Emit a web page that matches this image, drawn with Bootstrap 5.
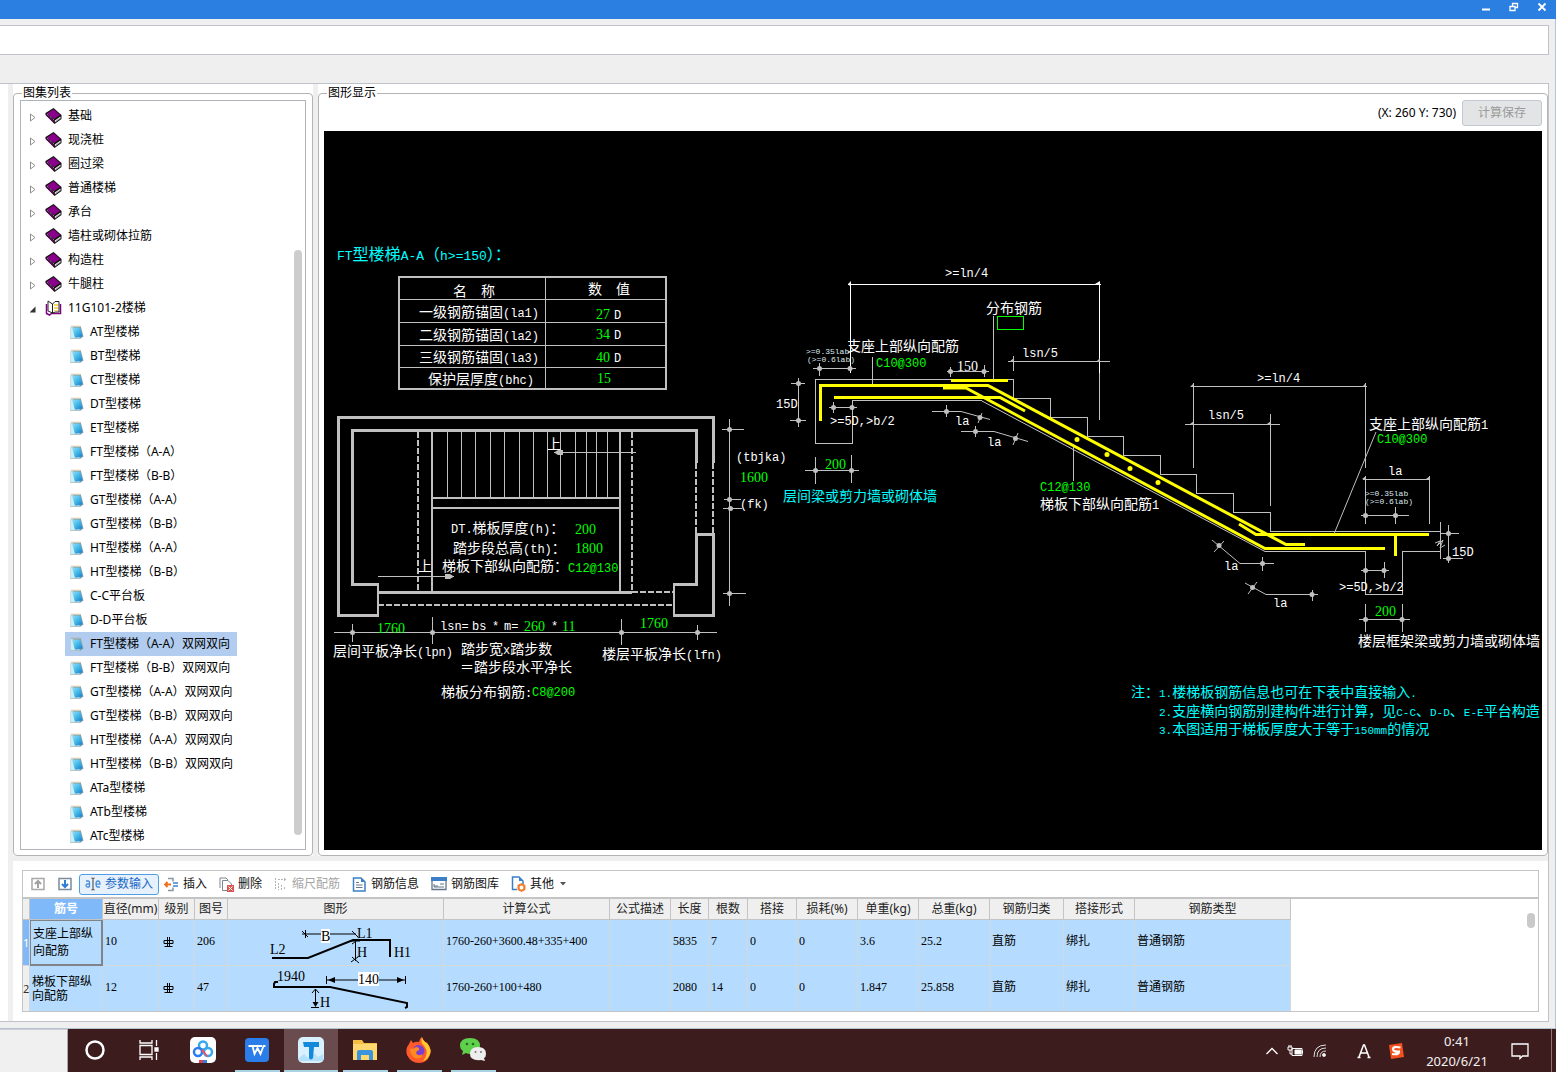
<!DOCTYPE html>
<html lang="zh-CN">
<head>
<meta charset="utf-8">
<meta name="viewport" content="width=device-width, initial-scale=1">
<title>钢筋计算</title>
<link href="https://cdn.jsdelivr.net/npm/bootstrap@5.3.0/dist/css/bootstrap.min.css" rel="stylesheet">
<style>
:root { --line:#bfc3c9; --face:#efefef; }
body { font-family:"Noto Sans","Noto Sans CJK SC",sans-serif; font-size:12px; line-height:16px; color:#000; background:var(--face); }
.titlebar { background:#2b7fe1; height:19px; }
.titlebar button { width:28px; height:13px; line-height:0; }
.plain { border:0; background:none; padding:0; color:inherit; }
.app-body { padding:6px 6px 6px 0; border-right:1px solid #b4c3d4; border-bottom:1px solid #b4c3d4; }
.strip { height:30px; background:#fff; border:1px solid var(--line); border-left:0; margin-bottom:28px; }
.workspace { border:1px solid var(--line); border-left:0; background:var(--face); }
.gutter { width:8px; background:#fff; margin-right:5px; flex:none; }
.panes { min-width:0; }
.groups { gap:5px; }
.side, .view { background:#fff; padding-top:2px; }
.side { width:300px; flex:none; }
.groupbox { border:1px solid #b4b4b4; border-radius:4px; padding:0 5px; padding-bottom:5px; margin:0; height:100%; }
.groupbox legend { float:none; width:auto; font-size:12px; line-height:14px; margin:0 0 0 3px; padding:0 1px; }
.side .groupbox { padding-left:6px; padding-right:6px; }
.side legend { margin-left:2px; }
.tree-box { border:1px solid #b0b4b8; padding:3px 0 1px; position:relative; }
.tree-box ul { margin:0; padding:0; list-style:none; }
.tree-row { height:24px; padding-left:9px; }
.tree-row a, .leaf { color:#000; text-decoration:none; white-space:nowrap; }
.tree-row .plain { width:15px; height:16px; line-height:0; text-align:left; }
.tree-row .plain svg { margin-top:3px; }
.tree-row a { gap:6px; }
.leaf { height:24px; margin-left:44px; padding:0 7px 0 5px; gap:6px; width:max-content; }
.leaf.active { background:#b1ccee; }
.thumb { position:absolute; right:3px; top:149px; bottom:14px; width:8px; border-radius:4px; background:#cdcdcd; }
.coordbar { height:31px; gap:6px; padding-bottom:6px; }
.btn-save { font-size:12px; line-height:16px; width:80px; height:26px; padding:0; border-radius:3px; }
.btn-save:disabled { background:#e3e4e5; color:#9a9a9a; border-color:#c1c8d2; opacity:1; }
.cad { background:#000; }
.cad svg { display:block; width:100%; height:auto; }
.lower { background:#fff; margin:5px 0 0; padding:9px; }
.grid-box { border:1px solid #c4c4c4; position:relative; }
.toolbar { height:28px; border-bottom:2px solid #c4c4c4; padding:0 2px; gap:2px; }
.tool { font-size:12px; line-height:16px; height:21px; padding:0 4px; gap:4px; border-radius:3px; border:1px solid transparent; color:#111; display:inline-flex; align-items:center; background:none; white-space:nowrap; }
.tool:disabled { color:#a5a5a5; border-color:transparent; opacity:1; }
.tool.on { border-color:#4f9fe8; background:#e7f1fc; color:#1969c8; padding:0 5px; margin-right:-2px; }
.tool.only { width:25px; justify-content:center; }
.rebar { table-layout:fixed; width:1268px; border-collapse:separate; border-spacing:0; margin:0; }
.rebar th { height:21px; padding:0; font-weight:400; text-align:center; background:#efefef; color:#222; border-right:1px solid #c4c4c4; border-bottom:1px solid #c4c4c4; white-space:nowrap; overflow:hidden; }
.rebar th.cur { background:#80b9fa; color:#fff; font-weight:700; }
.rebar td { height:46px; padding:0 2px 4px; background:#b5dcff; border-right:1px solid #d3d8dd; border-bottom:1px solid #d3d8dd; font-family:"Liberation Serif","Noto Sans CJK SC",serif; vertical-align:middle; white-space:nowrap; }
.rebar tr:last-child td { height:45px; border-bottom:0; }
.rebar td.no { padding:0; background:#efefef; font-family:"Noto Sans",sans-serif; font-size:11px; color:#333; }
.rebar td.no.cur { background:#80b9fa; color:#fff; }
.rebar td.title { white-space:normal; line-height:17px; padding:0 2px; }
.rebar td.title.sel { border:1px solid #808488; border-right-width:2px; border-bottom-width:2px; }
.rebar tr:last-child td.title { line-height:14px; }
.rebar td.shape { padding:0; line-height:0; }
.rebar td.grade svg { margin-left:2px; }
.grid-thumb { position:absolute; right:3px; top:42px; width:8px; height:15px; border-radius:4px; background:#c9c9c9; }
.taskbar { background:#3d1c1d; height:43px; color:#fff; }
.search { width:68px; background:#f0f0f0; border-top:1px solid #cfcfcf; border-right:1px solid #aaa; flex:none; }
.app { width:54px; padding-bottom:2px; position:relative; display:flex; align-items:center; justify-content:center; }
.app.run::after { content:""; position:absolute; left:5px; right:4px; bottom:0; height:2px; background:#a9d3e2; }
.app.now { background:#6a4c4e; }
.app.now::after { left:0; right:0; }
.tray { gap:8px; }
.clock { font-size:13px; line-height:20px; width:72px; color:#f2f2f2; }
.peek { width:5px; border-left:1px solid #8c7676; }
.c { font:14px/1 "Noto Sans CJK SC",sans-serif; fill:#fff; }
.l { font:12px/1 "Liberation Mono",monospace; fill:#fff; }
.n { font:14px/1 "Liberation Serif",serif; fill:#0f0; }
.w { fill:#fff; }
.s { font:8px/1 "Liberation Mono",monospace; fill:#dfe8ee; }
.g { fill:#0f0; }
.cy, .cy tspan { fill:#0ff; }
.big { font-size:16px; } .big .l { font-size:13px; }
.memo .l { font-size:11px; }
.k { font:14px/1 "Liberation Serif",serif; }
.thin { fill:none; stroke:#c0c0c0; stroke-width:1; shape-rendering:crispEdges; }
.slant { fill:none; stroke:#c0c0c0; stroke-width:1; }
.mid { fill:none; stroke:#c0c0c0; stroke-width:2; shape-rendering:crispEdges; }
.wall { fill:none; stroke:#c0c0c0; stroke-width:3; shape-rendering:crispEdges; }
.dash { stroke-dasharray:6 2; }
.bar { fill:none; stroke:#ff0; stroke-width:3; }
.dot { fill:#c0c0c0; }
</style>
<script src="https://cdn.jsdelivr.net/npm/bootstrap@5.3.0/dist/js/bootstrap.bundle.min.js"></script>
</head>
<body class="d-flex flex-column min-vh-100">
<svg width="0" height="0" class="position-absolute" aria-hidden="true">
  <linearGradient id="sky" x1="0" y1="0" x2="1" y2="1"><stop offset="0" stop-color="#9be0f8"/><stop offset=".5" stop-color="#45b9ec"/><stop offset="1" stop-color="#1476c4"/></linearGradient>
  <symbol id="book" viewBox="0 0 16 16"><path d="M0 5 8 0l8 7v4l-7 5-9-9z" fill="#111"/><path d="M1.500 5.500 8 1.300l6.500 5.700L8.500 11z" fill="#8b008b"/><path d="M1 6.500 8 12.500v2L1 7.800z" fill="#700070"/><path d="M9.300 12.500 15 8.500v2l-5.700 4z" fill="#f2f2f2"/><path d="M1.500 6 8.500 12" stroke="#f0c8f0" stroke-width=".8" stroke-dasharray="1 1"/><path d="M10 13.500 14.500 10.300" stroke="#555" stroke-width=".6"/></symbol>
  <symbol id="open" viewBox="0 0 16 16"><path d="M1 4v9.500l3 1.500 2-1.500h9V4" fill="none" stroke="#800080" stroke-width="1.500"/><path d="M2.500 1 7 4v9l-4.500-2z" fill="#fff" stroke="#222"/><path d="M7 4 9.500 1.500h4V12H10l-3 1z" fill="#fff" stroke="#222"/><path d="M9.500 4v7M11.500 4v7" stroke="#f0cf30" stroke-width="1.500" stroke-dasharray="2 1"/></symbol>
  <symbol id="note" viewBox="0 0 14 16"><path d="M.5 3h9.500l1 0 2.500 9.500L10 15H.5z" fill="#7fa3b2"/><path d="M.5 3H3l2 10.500H10L9.500 14.500H.5z" fill="#cdeef2"/><path d="M2 3.500h8l2.500 9-7.500 1z" fill="url(#sky)"/><path d="M1.500 2.500h9" stroke="#a8946c" stroke-width="1.500" stroke-dasharray="1 1"/></symbol>
</svg>

<header class="titlebar d-flex justify-content-end text-white">
  <button class="plain" aria-label="最小化"><svg width="10" height="10"><path d="M1 7.500h8" stroke="#fff" stroke-width="2"/></svg></button>
  <button class="plain" aria-label="还原"><svg width="10" height="10"><path d="M1 4.500h5v4H1zM3.500 4V1.500h5v4H6" fill="none" stroke="#fff" stroke-width="1.300"/></svg></button>
  <button class="plain" aria-label="关闭"><svg width="10" height="10"><path d="M1.500 1.500l7 7M8.500 1.500l-7 7" stroke="#fff" stroke-width="1.800"/></svg></button>
</header>

<main class="app-body flex-grow-1">
  <div class="strip"></div>
  <div class="workspace d-flex">
    <div class="gutter"></div>
    <div class="panes flex-grow-1">
      <div class="groups d-flex">
        <section class="side">
          <fieldset class="groupbox"><legend>图集列表</legend>
            <div class="tree-box">
              <ul>
                <li class="tree-row d-flex align-items-center"><button class="plain" aria-label="展开"><svg width="8" height="10"><path d="M.5 1v7L5 4.500z" fill="#fff" stroke="#909090"/></svg></button><a href="#" class="d-flex align-items-center"><svg width="17" height="16"><use href="#book"/></svg>基础</a></li>
                <li class="tree-row d-flex align-items-center"><button class="plain" aria-label="展开"><svg width="8" height="10"><path d="M.5 1v7L5 4.500z" fill="#fff" stroke="#909090"/></svg></button><a href="#" class="d-flex align-items-center"><svg width="17" height="16"><use href="#book"/></svg>现浇桩</a></li>
                <li class="tree-row d-flex align-items-center"><button class="plain" aria-label="展开"><svg width="8" height="10"><path d="M.5 1v7L5 4.500z" fill="#fff" stroke="#909090"/></svg></button><a href="#" class="d-flex align-items-center"><svg width="17" height="16"><use href="#book"/></svg>圈过梁</a></li>
                <li class="tree-row d-flex align-items-center"><button class="plain" aria-label="展开"><svg width="8" height="10"><path d="M.5 1v7L5 4.500z" fill="#fff" stroke="#909090"/></svg></button><a href="#" class="d-flex align-items-center"><svg width="17" height="16"><use href="#book"/></svg>普通楼梯</a></li>
                <li class="tree-row d-flex align-items-center"><button class="plain" aria-label="展开"><svg width="8" height="10"><path d="M.5 1v7L5 4.500z" fill="#fff" stroke="#909090"/></svg></button><a href="#" class="d-flex align-items-center"><svg width="17" height="16"><use href="#book"/></svg>承台</a></li>
                <li class="tree-row d-flex align-items-center"><button class="plain" aria-label="展开"><svg width="8" height="10"><path d="M.5 1v7L5 4.500z" fill="#fff" stroke="#909090"/></svg></button><a href="#" class="d-flex align-items-center"><svg width="17" height="16"><use href="#book"/></svg>墙柱或砌体拉筋</a></li>
                <li class="tree-row d-flex align-items-center"><button class="plain" aria-label="展开"><svg width="8" height="10"><path d="M.5 1v7L5 4.500z" fill="#fff" stroke="#909090"/></svg></button><a href="#" class="d-flex align-items-center"><svg width="17" height="16"><use href="#book"/></svg>构造柱</a></li>
                <li class="tree-row d-flex align-items-center"><button class="plain" aria-label="展开"><svg width="8" height="10"><path d="M.5 1v7L5 4.500z" fill="#fff" stroke="#909090"/></svg></button><a href="#" class="d-flex align-items-center"><svg width="17" height="16"><use href="#book"/></svg>牛腿柱</a></li>
                <li>
                  <div class="tree-row d-flex align-items-center"><button class="plain" aria-label="折叠"><svg width="8" height="10"><path d="M5.500 1.500V7.500H-.5z" fill="#333"/></svg></button><a href="#" class="d-flex align-items-center"><svg width="17" height="16"><use href="#open"/></svg>11G101-2楼梯</a></div>
                  <ul>
                    <li><a href="#" class="leaf d-flex align-items-center"><svg width="14" height="16"><use href="#note"/></svg>AT型楼梯</a></li>
                    <li><a href="#" class="leaf d-flex align-items-center"><svg width="14" height="16"><use href="#note"/></svg>BT型楼梯</a></li>
                    <li><a href="#" class="leaf d-flex align-items-center"><svg width="14" height="16"><use href="#note"/></svg>CT型楼梯</a></li>
                    <li><a href="#" class="leaf d-flex align-items-center"><svg width="14" height="16"><use href="#note"/></svg>DT型楼梯</a></li>
                    <li><a href="#" class="leaf d-flex align-items-center"><svg width="14" height="16"><use href="#note"/></svg>ET型楼梯</a></li>
                    <li><a href="#" class="leaf d-flex align-items-center"><svg width="14" height="16"><use href="#note"/></svg>FT型楼梯（A-A）</a></li>
                    <li><a href="#" class="leaf d-flex align-items-center"><svg width="14" height="16"><use href="#note"/></svg>FT型楼梯（B-B）</a></li>
                    <li><a href="#" class="leaf d-flex align-items-center"><svg width="14" height="16"><use href="#note"/></svg>GT型楼梯（A-A）</a></li>
                    <li><a href="#" class="leaf d-flex align-items-center"><svg width="14" height="16"><use href="#note"/></svg>GT型楼梯（B-B）</a></li>
                    <li><a href="#" class="leaf d-flex align-items-center"><svg width="14" height="16"><use href="#note"/></svg>HT型楼梯（A-A）</a></li>
                    <li><a href="#" class="leaf d-flex align-items-center"><svg width="14" height="16"><use href="#note"/></svg>HT型楼梯（B-B）</a></li>
                    <li><a href="#" class="leaf d-flex align-items-center"><svg width="14" height="16"><use href="#note"/></svg>C-C平台板</a></li>
                    <li><a href="#" class="leaf d-flex align-items-center"><svg width="14" height="16"><use href="#note"/></svg>D-D平台板</a></li>
                    <li><a href="#" class="leaf active d-flex align-items-center"><svg width="14" height="16"><use href="#note"/></svg>FT型楼梯（A-A）双网双向</a></li>
                    <li><a href="#" class="leaf d-flex align-items-center"><svg width="14" height="16"><use href="#note"/></svg>FT型楼梯（B-B）双网双向</a></li>
                    <li><a href="#" class="leaf d-flex align-items-center"><svg width="14" height="16"><use href="#note"/></svg>GT型楼梯（A-A）双网双向</a></li>
                    <li><a href="#" class="leaf d-flex align-items-center"><svg width="14" height="16"><use href="#note"/></svg>GT型楼梯（B-B）双网双向</a></li>
                    <li><a href="#" class="leaf d-flex align-items-center"><svg width="14" height="16"><use href="#note"/></svg>HT型楼梯（A-A）双网双向</a></li>
                    <li><a href="#" class="leaf d-flex align-items-center"><svg width="14" height="16"><use href="#note"/></svg>HT型楼梯（B-B）双网双向</a></li>
                    <li><a href="#" class="leaf d-flex align-items-center"><svg width="14" height="16"><use href="#note"/></svg>ATa型楼梯</a></li>
                    <li><a href="#" class="leaf d-flex align-items-center"><svg width="14" height="16"><use href="#note"/></svg>ATb型楼梯</a></li>
                    <li><a href="#" class="leaf d-flex align-items-center"><svg width="14" height="16"><use href="#note"/></svg>ATc型楼梯</a></li>
                  </ul>
                </li>
              </ul>
              <div class="thumb"></div>
            </div>
          </fieldset>
        </section>

        <section class="view flex-grow-1">
          <fieldset class="groupbox"><legend>图形显示</legend>
            <div class="coordbar d-flex justify-content-end align-items-center">
              <span>(X: 260 Y: 730)</span>
              <button class="btn btn-save" disabled>计算保存</button>
            </div>
            <div class="cad">
              <svg viewBox="324 131 1218 719" role="img" aria-label="FT型楼梯配筋图">
                <defs>
                  <g id="nd"><circle r="2.500" class="dot"/></g>
                </defs>
                <text class="c cy big" x="337" y="260"><tspan class="l">FT</tspan>型楼梯<tspan class="l">A-A</tspan>（<tspan class="l">h&gt;=150</tspan>）：</text>
                <!-- parameter table -->
                <rect class="mid" x="399" y="277" width="267" height="112"/>
                <path class="thin" d="M545.500 277V389M399 299.500H666M399 322.500H666M399 345.500H666M399 367.500H666"/>
                <text class="c" x="453" y="296">名　称</text><text class="c" x="588" y="294">数　值</text>
                <text class="c" x="419" y="317">一级钢筋锚固<tspan class="l">(la1)</tspan></text>
                <text class="c" x="419" y="340">二级钢筋锚固<tspan class="l">(la2)</tspan></text>
                <text class="c" x="419" y="362">三级钢筋锚固<tspan class="l">(la3)</tspan></text>
                <text class="c" x="428" y="384">保护层厚度<tspan class="l">(bhc)</tspan></text>
                <text class="n" x="596" y="319">27</text><text class="l" x="614" y="319">D</text>
                <text class="n" x="596" y="339">34</text><text class="l" x="614" y="339">D</text>
                <text class="n" x="596" y="362">40</text><text class="l" x="614" y="362">D</text>
                <text class="n" x="597" y="383">15</text>
                <!-- plan: walls -->
                <path class="wall" d="M378 615.500H338.500V417.500H713.500V463M696.500 463V430.500H352.500V584.500H378"/>
                <path class="mid" d="M378 583V617"/>
                <path class="wall" d="M696.500 534.500V584.500H674M695 534.500H713.500V615.500H674M378 592.500H632"/>
                <path class="mid" d="M674 583V617"/>
                <path class="mid dash" d="M696 463V534M713 463V534M632 592H674M378 605H674M418 432V592M632 432V592"/>
                <path class="mid" d="M432 432V592M620 432V592M432 498H620M432 508H620"/>
                <path class="thin" d="M447.500 432V498M461.500 432V498M475.500 432V498M490.500 432V498M504.500 432V498M519.500 432V498M533.500 432V498M547.500 432V498M560.500 432V498M575.500 432V498M586.500 432V498M596.500 432V498M607.500 432V498"/>
                <path class="thin" d="M554 452.500H636M378 576.500H454"/>
                <path class="dot" d="M554 452.500 558 450H563V455H558ZM454 576.500 450 574H445V579H450Z"/>
                <text class="c" x="547" y="449">上</text><text class="c" x="418" y="571">上</text>
                <text class="c" x="451" y="533"><tspan class="l">DT.</tspan>梯板厚度<tspan class="l">(h)</tspan>：</text><text class="n" x="575" y="534">200</text>
                <text class="c" x="453" y="553">踏步段总高<tspan class="l">(th)</tspan>：</text><text class="n" x="575" y="553">1800</text>
                <text class="c" x="442" y="571">梯板下部纵向配筋：</text><text class="l g" x="568" y="572">C12@130</text>
                <!-- plan: dimensions -->
                <path class="thin" d="M729.500 419V606M722 429.500H744M724 499.500H741M723 508.500H742M723 593.500H746"/>
                <use href="#nd" x="729.500" y="429.500"/><use href="#nd" x="729.500" y="499.500"/><use href="#nd" x="730.500" y="508.500"/><use href="#nd" x="729.500" y="593.500"/>
                <text class="l" x="736" y="461">(tbjka)</text><text class="n" x="740" y="482">1600</text><text class="l" x="740" y="508">(fk)</text>
                <path class="thin" d="M334 632.500H717M352.500 624V642M432.500 617V644M621.500 619V645M697.500 625V640"/>
                <use href="#nd" x="352.500" y="632.500"/><use href="#nd" x="432.500" y="632.500"/><use href="#nd" x="621.500" y="632.500"/><use href="#nd" x="697.500" y="632.500"/>
                <text class="n" x="377" y="633">1760</text><text class="l" x="440" y="630">lsn=</text><text class="l" x="472" y="630">bs</text><text class="l" x="492" y="630">*</text><text class="l" x="504" y="630">m=</text><text class="n" x="524" y="631">260</text><text class="l" x="551" y="630">*</text><text class="n" x="562" y="631">11</text><text class="n" x="640" y="628">1760</text>
                <text class="c" x="333" y="656">层间平板净长<tspan class="l">(lpn)</tspan></text>
                <text class="c" x="602" y="659">楼层平板净长<tspan class="l">(lfn)</tspan></text>
                <text class="c" x="461" y="654">踏步宽<tspan class="l">x</tspan>踏步数</text><text class="c" x="460" y="672">＝踏步段水平净长</text>
                <text class="c" x="441" y="697">梯板分布钢筋<tspan class="l">:</tspan></text><text class="l g" x="532" y="696">C8@200</text>

                <!-- section: concrete outline -->
                <path class="thin" d="M982 400.500H852V443.500H815.500V379.500H1013.500V398.500H1050.500V417.500H1087.500V436.500H1123.500V455.500H1160.500V474.500H1196.500V493.500H1233.500V512.500H1270.500V531.500H1440M1265 551.500H1365.500V594.500H1402.500V551.500H1440"/>
                <path class="slant" d="M982 401 1265 551.500"/>
                <!-- section: reinforcement -->
                <path class="bar" d="M820.500 421V385.500H988L1286 544.500H1305M943 388H966L1265 548.500H1385M834 397.500H1000L1025 411M951 380.500H1008M1239 524 1256 534.500H1429M1395.500 535V556"/>
                <g fill="#ff0"><circle cx="1077" cy="439.500" r="2.500"/><circle cx="1107" cy="454.500" r="2.500"/><circle cx="1130" cy="468.500" r="2.500"/><circle cx="1158" cy="482.500" r="2.500"/></g>
                <!-- section: left dimensions -->
                <path d="M848 284.500H1101M850.500 282V373M1099.500 282V373" stroke="#fff" shape-rendering="crispEdges"/>
                <path d="M848 284 851 281V287ZM1095 284 1100 281V284Z" fill="#fff"/>
                <path class="thin" d="M1099.500 373V420M993.500 316V380M872.500 357V384M813 368.500H856M819.500 363V376M1008 361.500H1110M1013.500 356V371M947 371.500H989M950.500 367V377M984.500 365V377"/>
                <path class="thin" d="M798.500 378V427M791 383.500H805M790 420.500H806M829 407.500H857M833.500 402V413M852.500 402V413M805 470.500H859M815.500 457V484M851.500 455V483M1073.500 447V481"/>
                <path class="slant" d="M932 411.500H961L990 419.500M946.500 405V417M982 413 978 423M961 431.500H994L1028 441.500M975.500 426V437M1018 433 1013 445"/>
                <g><use href="#nd" x="819.500" y="368.500"/><use href="#nd" x="850" y="368.500"/><use href="#nd" x="950.500" y="371.500"/><use href="#nd" x="984" y="371.500"/><use href="#nd" x="798.500" y="383.500"/><use href="#nd" x="798.500" y="420.500"/><use href="#nd" x="833.500" y="407.500"/><use href="#nd" x="852" y="407.500"/><use href="#nd" x="815.500" y="470.500"/><use href="#nd" x="851.500" y="470.500"/><use href="#nd" x="946.500" y="411.500"/><use href="#nd" x="980" y="417.500"/><use href="#nd" x="975.500" y="431.500"/><use href="#nd" x="1015.500" y="438.500"/></g>
                <path class="dot" d="M1009 362 1014 358V362ZM1096 362 1100 358V362Z"/>
                <rect x="997.500" y="316.500" width="26" height="13" fill="none" stroke="#0f0" shape-rendering="crispEdges"/>
                <text class="l" x="945" y="277">&gt;=ln/4</text><text class="c" x="986" y="313">分布钢筋</text>
                <text class="c" x="847" y="351">支座上部纵向配筋</text><text class="l g" x="876" y="367">C10@300</text>
                <text class="s" x="806" y="354">&gt;=0.35lab</text><text class="s" x="807" y="362">(&gt;=0.6lab)</text>
                <text class="n w" x="957" y="371">150</text><text class="l" x="1022" y="357">lsn/5</text>
                <text class="l" x="776" y="408">15D</text><text class="l" x="830" y="425">&gt;=5D,&gt;b/2</text>
                <text class="l" x="955" y="425">la</text><text class="l" x="987" y="446">la</text>
                <text class="n" x="825" y="469">200</text><text class="c cy" x="783" y="501">层间梁或剪力墙或砌体墙</text>
                <text class="l g" x="1040" y="491">C12@130</text><text class="c" x="1040" y="509">梯板下部纵向配筋<tspan class="l">1</tspan></text>
                <!-- section: right dimensions -->
                <path class="thin" d="M1191 386.500H1367M1193.500 383V468M1365.500 383V468M1185 424.500H1280M1270.500 414V506M1363 479.500H1430M1365.500 476V524M1429.500 476V524M1361 515.500H1409M1395.500 507V524"/>
                <path class="thin" d="M1440.500 522V559M1448.500 525V563M1441 533.500H1459M1443 558.500H1463M1361 570.500H1389M1384.500 562V578M1359 619.500H1410M1365.500 604V632M1402.500 604V632"/>
                <path class="slant" d="M1376 432 1334 534M1435 543 1440 541 1437 546 1443 540 1440 548 1445 545M1212 540 1240 563.500H1274M1262.500 557V571M1224 541 1214 552M1245 583 1266 594.500H1318M1312.500 590V601M1257 582 1248 594"/>
                <path class="dot" d="M1190 387 1194 383V387ZM1362 387 1366 383V387ZM1190 424 1194 421V425ZM1267 424 1271 421V425ZM1362 479 1366 476V480ZM1426 479 1430 476V480Z"/>
                <g><use href="#nd" x="1365.500" y="515.500"/><use href="#nd" x="1395.500" y="515.500"/><use href="#nd" x="1448.500" y="533.500"/><use href="#nd" x="1448.500" y="558.500"/><use href="#nd" x="1365.500" y="570.500"/><use href="#nd" x="1384" y="570.500"/><use href="#nd" x="1365.500" y="619.500"/><use href="#nd" x="1402" y="619.500"/><use href="#nd" x="1219" y="545.500"/><use href="#nd" x="1262.500" y="563.500"/><use href="#nd" x="1252.500" y="587.500"/><use href="#nd" x="1312" y="594.500"/></g>
                <text class="l" x="1257" y="382">&gt;=ln/4</text><text class="l" x="1208" y="419">lsn/5</text>
                <text class="c" x="1369" y="429">支座上部纵向配筋<tspan class="l">1</tspan></text><text class="l g" x="1377" y="443">C10@300</text>
                <text class="l" x="1388" y="475">la</text><text class="s" x="1365" y="496">&gt;=0.35lab</text><text class="s" x="1365" y="504">(&gt;=0.6lab)</text>
                <text class="l" x="1452" y="556">15D</text><text class="l" x="1339" y="591">&gt;=5D,&gt;b/2</text>
                <text class="n" x="1375" y="616">200</text><text class="c" x="1358" y="646">楼层框架梁或剪力墙或砌体墙</text>
                <text class="l" x="1224" y="570">la</text><text class="l" x="1273" y="607">la</text>
                <!-- notes -->
                <text class="c cy memo" x="1131" y="697">注：<tspan class="l">1.</tspan>楼梯板钢筋信息也可在下表中直接输入<tspan class="l">.</tspan></text>
                <text class="c cy memo" x="1159" y="716"><tspan class="l">2.</tspan>支座横向钢筋别建构件进行计算，见<tspan class="l">C-C</tspan>、<tspan class="l">D-D</tspan>、<tspan class="l">E-E</tspan>平台构造</text>
                <text class="c cy memo" x="1159" y="734"><tspan class="l">3.</tspan>本图适用于梯板厚度大于等于<tspan class="l">150mm</tspan>的情况</text>
              </svg>
            </div>
          </fieldset>
        </section>
      </div>

      <section class="lower">
        <div class="grid-box">
          <div class="toolbar d-flex align-items-center" role="toolbar">
            <button class="tool only" disabled aria-label="上移"><svg width="14" height="14"><path d="M1 1.500h12v11H1z" fill="none" stroke="#a8a8a8" stroke-width="1.500"/><path d="M7 11V4M4 7l3-3 3 3" fill="none" stroke="#a0a0a0" stroke-width="2"/></svg></button>
            <button class="tool only" aria-label="下移"><svg width="14" height="14"><path d="M1 1.500h12v11H1z" fill="none" stroke="#7b8c9c" stroke-width="1.500"/><path d="M7 3v7M4 7l3 3 3-3" fill="none" stroke="#2f7fd8" stroke-width="2"/></svg></button>
            <button class="tool on"><svg width="16" height="14" fill="none" stroke="#4a8fd8" stroke-width="1.300"><path d="M1 4h2q1.500 0 1.500 1.500V10M4.500 7H2.500Q1 7 1 8.500T2.500 10H4.500M11 7.200h4Q15 4 13 4t-2 3q0 3 2 3h2"/><path d="M8 1.500v11M6.500.7 8 1.700 9.500.7M6.500 13.300 8 12.300l1.500 1" stroke="#666"/></svg>参数输入</button>
            <button class="tool"><svg width="15" height="15" fill="none"><path d="M4 1.500h5v3M4 13.500h5v-3" stroke="#8a96a3" stroke-width="1.500"/><path d="M1 7.500h6M3.500 5 1 7.500l2.500 2.500" stroke="#f07020" stroke-width="1.800"/><path d="M9 6h5M9 9h5" stroke="#3b84d8" stroke-width="1.500"/></svg>插入</button>
            <button class="tool"><svg width="15" height="15" fill="none"><path d="M1 11V1h6l2 2" stroke="#7c8793"/><path d="M3.500 13.500v-10H9L12.500 7v6.500z" fill="#fff" stroke="#7c8793"/><path d="M8 8h7v7H8z" fill="#d9534f"/><path d="m9.500 9.500 4 4m0-4-4 4" stroke="#fff"/></svg>删除</button>
            <button class="tool" disabled><svg width="14" height="14" fill="none" stroke="#b5b5b5"><path d="M1.500 1v12M4.500 6v7M7.500 8v5M10.500 10v3M4 2.500h8M10 1l2 1.500L10 4" stroke-dasharray="2 1"/></svg>缩尺配筋</button>
            <button class="tool"><svg width="15" height="15" fill="none"><path d="M1.500 1h7.500l4 4v9H1.500z" stroke="#3b7fc8" stroke-width="1.500"/><path d="M9 1v4h4" fill="#3b7fc8"/><path d="M4 5.500h3M4 8h6.500M4 10.500h6.500" stroke="#66788a"/></svg>钢筋信息</button>
            <button class="tool"><svg width="16" height="14" fill="none"><path d="M1 1.500h14v11H1z" stroke="#60758a" stroke-width="1.300"/><path d="M0 0h16v4H0z" fill="#3b7fc8"/><path d="M3 9h4M9 7h4M3 7v3h10" stroke="#60758a"/></svg>钢筋图库</button>
            <button class="tool"><svg width="15" height="16" fill="none"><path d="M6 13.500H1.500V1H8l4 4v3" stroke="#3b7fc8" stroke-width="1.500"/><path d="M8 1v4h4" fill="#3b7fc8"/><circle cx="10.500" cy="11.500" r="3" stroke="#f08030" stroke-width="2.200"/><path d="M10.500 7v9M6.500 9.300l8 4.400M6.500 13.700l8-4.400" stroke="#f08030" stroke-dasharray="1.500 6"/></svg>其他<svg width="12" height="6"><path d="M2 1h6L5 4.500z" fill="#555"/></svg></button>
          </div>
          <table class="rebar">
            <colgroup><col style="width:7px"><col style="width:73px"><col style="width:56px"><col style="width:36px"><col style="width:33px"><col style="width:216px"><col style="width:166px"><col style="width:61px"><col style="width:38px"><col style="width:39px"><col style="width:49px"><col style="width:61px"><col style="width:61px"><col style="width:71px"><col style="width:74px"><col style="width:71px"><col style="width:156px"></colgroup>
            <thead><tr><th></th><th class="cur">筋号</th><th>直径(mm)</th><th>级别</th><th>图号</th><th>图形</th><th>计算公式</th><th>公式描述</th><th>长度</th><th>根数</th><th>搭接</th><th>损耗(%)</th><th>单重(kg)</th><th>总重(kg)</th><th>钢筋归类</th><th>搭接形式</th><th>钢筋类型</th></tr></thead>
            <tbody>
              <tr><td class="no cur">1</td><td class="title sel">支座上部纵向配筋</td><td>10</td>
                <td class="grade"><svg width="12" height="12" fill="none" stroke="#000"><path d="M1 4.500h9v3H1zM4.500 1v9M6.500 1v9M1.500 10.500h8"/></svg></td><td>206</td>
                <td class="shape"><svg width="215" height="45" viewBox="228 920 215 45"><path d="M272 958H308L353 940H390V957" fill="none" stroke="#000" stroke-width="2"/><path d="M302 934H356M305.500 930V938M302 931l6 6M352 931l6 6M355.500 941V961M351 941h9M352 944l7-5M352 957l7 6M351 962l7-5" stroke="#000" fill="none"/><path d="M321 929h9v14h-9z" fill="#fff"/><g class="k"><text x="321" y="941">B</text><text x="270" y="954">L2</text><text x="357" y="938">L1</text><text x="357" y="957">H</text><text x="394" y="957">H1</text></g></svg></td>
                <td>1760-260+3600.48+335+400</td><td></td><td>5835</td><td>7</td><td>0</td><td>0</td><td>3.6</td><td>25.2</td><td>直筋</td><td>绑扎</td><td>普通钢筋</td></tr>
              <tr><td class="no">2</td><td class="title">梯板下部纵向配筋</td><td>12</td>
                <td class="grade"><svg width="12" height="12" fill="none" stroke="#000"><path d="M1 4.500h9v3H1zM4.500 1v9M6.500 1v9M1.500 10.500h8"/></svg></td><td>47</td>
                <td class="shape"><svg width="215" height="45" viewBox="228 966 215 45"><path d="M278 982h-3l-1 2v3H330L407 1003v4l-2 1" fill="none" stroke="#000" stroke-width="2"/><path d="M327 980H405M326.500 976V984M405.500 976V984M315.500 989V1006M311 1007.500h8M312 993l3.500-4 3.500 4" stroke="#000" fill="none"/><path d="M328 980l7-3v6zM404 980l-7-3v6zM315.500 1007l-3-5h6z"/><path d="M358 972h21v14h-21z" fill="#fff"/><g class="k"><text x="277" y="981">1940</text><text x="358" y="984">140</text><text x="320" y="1007">H</text></g></svg></td>
                <td>1760-260+100+480</td><td></td><td>2080</td><td>14</td><td>0</td><td>0</td><td>1.847</td><td>25.858</td><td>直筋</td><td>绑扎</td><td>普通钢筋</td></tr>
            </tbody>
          </table>
          <div class="grid-thumb"></div>
        </div>
      </section>
    </div>
  </div>
</main>

<footer class="taskbar d-flex">
  <div class="search"></div>
  <button class="plain app" aria-label="Cortana"><svg width="22" height="22"><circle cx="11" cy="11" r="8.500" fill="none" stroke="#fff" stroke-width="2.500"/></svg></button>
  <button class="plain app" aria-label="任务视图"><svg width="22" height="22" fill="none" stroke="#fff" stroke-width="1.300"><path d="M2 6.500h12v9H2zM2 1v3h12V1M2 21v-3h12v3M18.500 1v6M18.500 14v7"/><path d="M17 9h3v3h-3z" fill="#fff"/></svg></button>
  <button class="plain app" aria-label="百度网盘"><svg width="28" height="28" fill="none"><rect x="1" y="1" width="26" height="26" rx="5" fill="#fff"/><circle cx="14" cy="9.500" r="4" stroke="#35a8ee" stroke-width="2.500"/><circle cx="9" cy="16" r="4" stroke="#2d7cf0" stroke-width="2.500"/><circle cx="19" cy="16" r="4" stroke="#35a8ee" stroke-width="2.500"/><path d="M12.500 14q1 0 3 3t3 3" stroke="#f0506a" stroke-width="2"/><path d="M10 25.500h4" stroke="#e04050" stroke-width="3"/><path d="M14 25.500h4" stroke="#3080e0" stroke-width="3"/></svg></button>
  <button class="plain app run" aria-label="WPS"><svg width="26" height="26"><rect x="1" y="1" width="24" height="24" rx="4" fill="#2b7de9"/><path d="M4.500 9h4l2 8 3-6 3 6 3-8h2M9 9h9" fill="none" stroke="#fff" stroke-width="1.800"/></svg></button>
  <button class="plain app run now" aria-label="钢筋计算"><svg width="28" height="28"><rect x="1" y="1" width="26" height="26" rx="5" fill="#d9f1ff"/><path d="M2 22l5-4 4 4 6-5 4 4 5-3v7H3z" fill="#b3e0fa"/><path d="M6 6h16v5h-5l-1 11q-2 3-4 0V11H7z" fill="#1489dc"/></svg></button>
  <button class="plain app run" aria-label="文件资源管理器"><svg width="26" height="24"><path d="M1 2h9l2 3h13v17H1z" fill="#f5bf45"/><path d="M1 6h24v16H1z" fill="#ffd86f"/><path d="M5 22v-8q0-2 2-2h12q2 0 2 2v8h-4v-5H9v5z" fill="#3b95db"/></svg></button>
  <button class="plain app run" aria-label="Firefox"><svg width="28" height="28"><path d="M4 8l2-4 2 3q3-2 6-1 0-3 3-5 1 4 5 6 5 6 3 12-3 8-11 8T2 19Q0 13 4 8z" fill="#ff5a2c"/><path d="M17 1q1 4 5 6 6 7 2 13-2 4-6 5 7-8 1-15-4-4-2-9z" fill="#ffc92e"/><circle cx="13.500" cy="15" r="6" fill="#7a3fd0"/><path d="M5 13q4 0 6-2 4 0 3 3-3 1-3 3 2 4 7 1-2 6-8 4-5-3-5-9z" fill="#ff8a1f"/></svg></button>
  <button class="plain app run" aria-label="微信"><svg width="30" height="28"><path d="M12 2q10 0 10 8t-10 8q-2 0-4-1l-4 2 1-4Q2 13 2 10q0-8 10-8z" fill="#5ed04b"/><circle cx="9" cy="8" r="1.300" fill="#256a20"/><circle cx="15" cy="8" r="1.300" fill="#256a20"/><path d="M20 11q8 0 8 7 0 3-2 4l1 3-4-1q-11 1-11-6 0-7 8-7z" fill="#eee"/><circle cx="17.500" cy="16" r="1" fill="#777"/><circle cx="23" cy="16" r="1" fill="#777"/></svg></button>
  <div class="tray ms-auto d-flex align-items-center">
    <button class="plain" aria-label="显示隐藏的图标"><svg width="14" height="12"><path d="M1.500 9 7 3.500 12.500 9" fill="none" stroke="#fff" stroke-width="1.300"/></svg></button>
    <svg width="17" height="14" fill="none" stroke="#fff"><path d="M5 4.500h10v7H5zM15.500 6.500v3M1 3h4v3H1zM2 1v2M4 1v2M3 6v4h2"/><path d="M8 6h6v4H8z" fill="#fff"/></svg>
    <svg width="15" height="15" fill="none" stroke="#ddd"><path d="M2 14Q2 2 14 2M5 14q0-9 9-9M8 14q0-6 6-6"/><circle cx="12" cy="12" r="1.500" fill="#fff"/></svg>
    <svg class="ms-3" width="24" height="18" fill="none" stroke="#fff" stroke-width="1.500"><path d="M8 15 12.500 3h1L18 15M9.500 11h7M6.500 15.500h3M16.500 15.500h3"/></svg>
    <svg class="ms-1" width="18" height="18"><path d="M2 3l13-2 2 14-13 2z" fill="#f4511e"/><path d="M13.500 5.500Q6 4 6 7t6 2.500Q12.500 13 5 12" fill="none" stroke="#fff" stroke-width="2.200"/></svg>
    <div class="clock text-center ms-2">0:41<br>2020/6/21</div>
    <button class="plain ms-2 me-2" aria-label="通知"><svg width="22" height="18" fill="none" stroke="#fff" stroke-width="1.300"><path d="M3 2h16v12h-5.500L11 16.500V14H3z"/></svg></button>
    <div class="peek align-self-stretch ms-1"></div>
  </div>
</footer>
</body>
</html>
